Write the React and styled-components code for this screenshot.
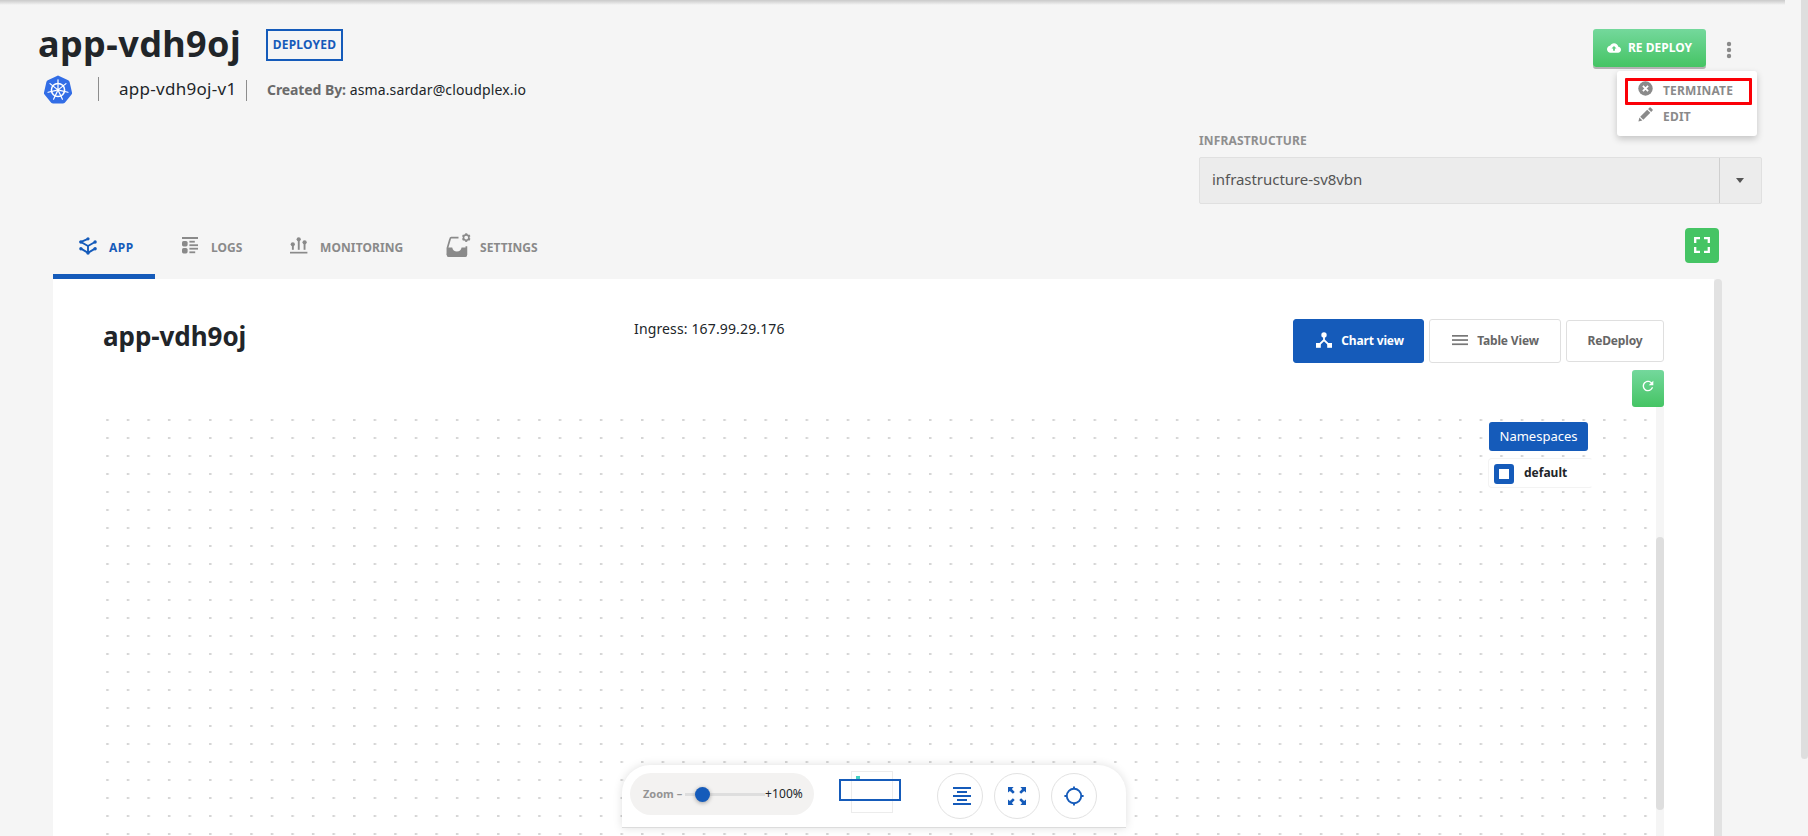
import React from 'react';
import styled, { createGlobalStyle } from 'styled-components';

const BLUE = '#155bba';
const GREEN = '#45c464';
const GREY = '#8a8a8a';

const GlobalStyle = createGlobalStyle`
  * { box-sizing: border-box; }
  body {
    margin: 0;
    overflow: hidden;
    background: #f5f5f5;
    color: #212529;
    font-family: "Noto Sans", "Open Sans", sans-serif;
  }
  button { font-family: inherit; margin: 0; padding: 0; border: 0; }
  svg { display: block; flex: none; }
`;

const Page = styled.div`
  display: flex;
  width: 1808px;
  height: 836px;
  overflow: hidden;
`;

const Main = styled.main`
  display: flex;
  flex-direction: column;
  width: 1801px;
`;

const ScrollTrack = styled.div`
  flex: none;
  width: ${(p) => p.$width}px;
  background: ${(p) => p.$bg || 'transparent'};
  padding-top: ${(p) => p.$offset || 0}px;
`;

const ScrollThumb = styled.div`
  height: ${(p) => p.$height};
  border-radius: ${(p) => p.$radius || '4px'};
  background: ${(p) => p.$color || '#dedede'};
`;

const TopShadow = styled.div`
  flex: none;
  width: 1785px;
  height: 5px;
  background: linear-gradient(#cacaca, #dcdcdc 45%, #f5f5f5);
`;

const Header = styled.header`
  display: flex;
  justify-content: space-between;
  flex: none;
  height: 203px;
  padding: 24px 39px 0 38px;
`;

const HeaderLeft = styled.div`
  display: flex;
  flex-direction: column;
`;

const TitleRow = styled.div`
  display: flex;
  height: 42px;
`;

const Title = styled.h1`
  margin: -9px 26px 0 0;
  width: 202px;
  font-size: 36px;
  font-weight: 700;
  line-height: 48px;
  letter-spacing: 0.4px;
  white-space: nowrap;
`;

const Badge = styled.span`
  width: 77px;
  height: 32px;
  border: 2px solid ${BLUE};
  color: ${BLUE};
  font-size: 12px;
  font-weight: 700;
  letter-spacing: 0.2px;
  line-height: 27px;
  text-align: center;
`;

const MetaRow = styled.div`
  display: flex;
  height: 32px;
  padding: 4px 0 0 5px;
  white-space: nowrap;
`;

const MetaDivider = styled.span`
  width: 1px;
  height: ${(p) => p.$height}px;
  margin: ${(p) => p.$margin};
  background: #8d8d8d;
`;

const Version = styled.span`
  width: 127px;
  font-size: 17px;
  line-height: 28px;
  letter-spacing: 0.28px;
`;

const Creator = styled.span`
  font-size: 14px;
  line-height: 30px;
  letter-spacing: 0.13px;
  b { color: #6a6a6a; letter-spacing: -0.09px; font-weight: 700; }
`;

const HeaderRight = styled.div`
  display: flex;
  flex-direction: column;
  align-items: flex-end;
  width: 563px;
`;

const Actions = styled.div`
  position: relative;
  display: flex;
  align-items: flex-start;
  width: 169px;
  height: 104px;
`;

const RedeployButton = styled.button`
  display: flex;
  align-items: center;
  width: 113px;
  height: 38px;
  padding: 0 0 1px 14px;
  gap: 7px;
  border-radius: 3px;
  background: linear-gradient(#74d89c, ${GREEN});
  box-shadow: 0 2px 0 #b3b3b3;
  color: #fff;
  font-size: 12px;
  font-weight: 700;
  white-space: nowrap;
`;

const MoreButton = styled.button`
  margin: 12px 0 0 20px;
  background: none;
`;

const Menu = styled.div`
  position: absolute;
  top: 42px;
  left: 24px;
  display: flex;
  flex-direction: column;
  width: 140px;
  height: 65px;
  padding: 7px 5px 0 8px;
  border-radius: 3px;
  background: #fff;
  box-shadow: 0 3px 7px rgba(0, 0, 0, 0.2);
`;

const MenuItem = styled.div`
  display: flex;
  align-items: center;
  height: 27px;
  gap: 10px;
  margin-top: ${(p) => (p.$marked ? 0 : -1)}px;
  padding-left: ${(p) => (p.$marked ? 10 : 13)}px;
  border: ${(p) => (p.$marked ? '3px solid #fb0007' : '0')};
  border-radius: 1px;
  color: ${GREY};
  font-size: 12px;
  font-weight: 700;
  letter-spacing: 0.2px;
  span { line-height: 16px; margin-top: -2px; }
  svg { margin-top: -7px; }
`;

const Field = styled.label`
  display: flex;
  flex-direction: column;
  width: 563px;
  gap: 8px;
`;

const FieldLabel = styled.span`
  height: 16px;
  color: #8f8f8f;
  font-size: 12px;
  font-weight: 700;
  letter-spacing: 0.14px;
  line-height: 16px;
`;

const Select = styled.div`
  display: flex;
  height: 47px;
  border: 1px solid #e0e0e0;
  border-radius: 2px;
  background: #ececec;
  color: #555;
  font-size: 15px;
  line-height: 43px;
  letter-spacing: -0.05px;
`;

const SelectValue = styled.span`
  flex: 1;
  padding-left: 12px;
`;

const SelectArrow = styled.span`
  display: flex;
  align-items: center;
  justify-content: center;
  width: 42px;
  padding-right: 1px;
  border-left: 1px solid #cfcfcf;
`;

const TabBar = styled.nav`
  display: flex;
  flex: none;
  height: 71px;
  padding: 0 0 0 53px;
`;

const Tab = styled.div`
  display: flex;
  flex: none;
  width: ${(p) => p.$width}px;
  height: 71px;
  padding: 20px 0 0 ${(p) => p.$pad}px;
  border-bottom: 5px solid ${(p) => (p.$active ? BLUE : 'transparent')};
  color: ${(p) => (p.$active ? BLUE : GREY)};
  font-size: 12px;
  font-weight: 700;
  letter-spacing: ${(p) => p.$spacing}px;
  white-space: nowrap;
`;

const TabIcon = styled.span`
  flex: none;
  width: ${(p) => p.$width}px;
  height: 30px;
  padding-top: ${(p) => p.$top}px;
`;

const TabText = styled.span`
  line-height: 16px;
  margin-top: 12px;
`;

const FullscreenButton = styled.button`
  display: flex;
  align-items: center;
  justify-content: center;
  width: 34px;
  height: 35px;
  margin: 20px 82px 0 auto;
  padding-bottom: 1px;
  border-radius: 4px;
  background: ${GREEN};
`;

const Body = styled.div`
  display: flex;
  flex: 1;
  min-height: 0;
  padding-left: 53px;
`;

const Panel = styled.section`
  display: flex;
  flex-direction: column;
  width: 1661px;
  padding: 40px 50px 0 50px;
  background: #fff;
`;

const PanelHeader = styled.div`
  display: flex;
  flex: none;
  height: 51px;
`;

const PanelTitle = styled.h2`
  width: 531px;
  margin: 0;
  font-size: 26px;
  font-weight: 700;
  line-height: 34px;
  letter-spacing: -0.05px;
`;

const Ingress = styled.p`
  flex: 1;
  margin: -1px 0 0;
  font-size: 14px;
  line-height: 22px;
  letter-spacing: 0.14px;
`;

const ViewButtons = styled.div`
  display: flex;
  align-items: flex-start;
  gap: 5px;
`;

const ViewButton = styled.button`
  display: flex;
  align-items: center;
  justify-content: center;
  gap: 9px;
  width: ${(p) => p.$width}px;
  height: ${(p) => p.$height || 44}px;
  margin-top: ${(p) => (p.$height ? 1 : 0)}px;
  padding: 0 0 2px ${(p) => p.$pad || 0}px;
  border: 1px solid ${(p) => (p.$primary ? BLUE : '#dfdfdf')};
  border-radius: 3px;
  background: ${(p) => (p.$primary ? BLUE : '#fff')};
  color: ${(p) => (p.$primary ? '#fff' : '#666')};
  font-size: 12px;
  font-weight: 700;
  letter-spacing: -0.15px;
  white-space: nowrap;
`;

const RefreshButton = styled.button`
  display: flex;
  flex: none;
  align-items: center;
  justify-content: center;
  align-self: flex-end;
  width: 32px;
  height: 37px;
  padding-bottom: 6px;
  border-radius: 3px;
  background: linear-gradient(#74d89c, ${GREEN});
`;

const CanvasRow = styled.div`
  display: flex;
  flex: 1;
  min-height: 0;
`;

const Canvas = styled.div`
  position: relative;
  width: 1553px;
  height: 429px;
  overflow: hidden;
`;

const Namespaces = styled.div`
  position: absolute;
  top: 15px;
  right: 63px;
  display: flex;
  flex-direction: column;
  gap: 7px;
  width: 105px;
`;

const NamespacesTitle = styled.div`
  width: 99px;
  height: 29px;
  margin-left: 1px;
  border-radius: 3px;
  background: ${BLUE};
  color: #fff;
  font-size: 13px;
  line-height: 28px;
  text-align: center;
`;

const NamespaceItem = styled.div`
  display: flex;
  align-items: center;
  gap: 10px;
  height: 30px;
  padding: 0 0 0 5px;
  border: 1px solid #f3f3f3;
  border-right-color: #fff;
  border-radius: 4px;
  background: #fff;
  font-size: 12px;
  font-weight: 700;
  span { margin-top: -1px; }
`;

const Checkbox = styled.i`
  width: 20px;
  height: 20px;
  margin-top: 1px;
  border: 5px solid ${BLUE};
  border-radius: 3px;
  background: #fff;
`;

const Toolbar = styled.div`
  position: absolute;
  left: 519px;
  top: 358px;
  display: flex;
  align-items: flex-start;
  width: 504px;
  height: 63px;
  padding: 8px 0 0 8px;
  border-bottom: 1px solid #dcdcdc;
  border-radius: 28px 28px 0 0;
  background: #fff;
  box-shadow: 0 0 10px rgba(0, 0, 0, 0.13);
`;

const ZoomPill = styled.div`
  display: flex;
  align-items: center;
  width: 184px;
  height: 42px;
  padding: 0 0 1px 13px;
  border-radius: 21px;
  background: #f3f2f1;
  font-size: 12px;
  letter-spacing: 0.1px;
`;

const ZoomLabel = styled.span`
  width: 42px;
  color: #949494;
  font-size: 11px;
  font-weight: 700;
  letter-spacing: 0;
  white-space: pre;
`;

const Slider = styled.div`
  display: flex;
  align-items: center;
  width: 80px;
  height: 3px;
  margin-top: 1px;
  padding-left: 10px;
  background: #dedede;
`;

const Knob = styled.i`
  width: 15px;
  height: 15px;
  border-radius: 50%;
  background: ${BLUE};
  box-shadow: 0 1px 4px rgba(0, 0, 0, 0.35);
`;

const MiniMap = styled.svg`
  margin: -3px 0 0 24px;
`;

const ToolButtons = styled.div`
  display: flex;
  gap: 11px;
  margin-left: 35px;
`;

const ToolButton = styled.button`
  display: flex;
  align-items: center;
  justify-content: center;
  width: 46px;
  height: 46px;
  padding: 0 0 1px ${(p) => p.$pad || 0}px;
  border: 1px solid #e2e2e2;
  border-radius: 50%;
  background: #fff;
`;

const spokes = [0, 51.43, 102.86, 154.29, 205.71, 257.14, 308.57];

function KubernetesLogo() {
  return (
    <svg width="30" height="29" viewBox="0 0 30 29">
      <path
        d="M15 .5 L25.2 5.3 Q26.3 5.9 26.6 7 L29 17.4 Q29.3 18.6 28.5 19.5 L21.8 27.8 Q21 28.6 19.9 28.6 H10.1 Q9 28.6 8.2 27.8 L1.5 19.5 Q.7 18.6 1 17.4 L3.4 7 Q3.7 5.9 4.8 5.3 Z"
        fill="#326de6"
      />
      <g stroke="#fff" fill="none" strokeLinecap="round">
        <circle cx="15" cy="15" r="6.6" strokeWidth="1.5" />
        {spokes.map((a) => (
          <path key={a} d="M15 13.2 V4.8" strokeWidth="1.2" transform={`rotate(${a} 15 15)`} />
        ))}
      </g>
      <circle cx="15" cy="15" r="1.7" fill="#fff" />
    </svg>
  );
}

function DotGrid() {
  return (
    <svg width="1553" height="429">
      <defs>
        <pattern id="dots" x="3.2" y="12" width="20.57" height="18" patternUnits="userSpaceOnUse">
          <rect x="0" y="0" width="2.5" height="2" fill="#d5d5d5" />
        </pattern>
        <pattern id="dots-next" x="1253.2" y="12" width="20.57" height="18" patternUnits="userSpaceOnUse">
          <rect x="0" y="0" width="2.5" height="2" fill="#d5d5d5" />
        </pattern>
      </defs>
      <rect x="0" y="10" width="1250" height="419" fill="url(#dots)" />
      <rect x="1253" y="10" width="296" height="419" fill="url(#dots-next)" />
    </svg>
  );
}

const AppIcon = () => (
  <svg width="18" height="18" viewBox="0 0 18 18" stroke={BLUE} strokeWidth="1.9" fill="none">
    <path d="M9 1.8 L2 5 L9 9 L16 5 M9 9 V16.2 M2 11.6 L9 15.8 L16 11.6" />
    <g fill={BLUE} stroke="none">
      <circle cx="9" cy="1.8" r="1.6" /><circle cx="1.9" cy="5" r="1.7" /><circle cx="16.1" cy="5" r="1.7" />
      <circle cx="1.9" cy="11.8" r="1.7" /><circle cx="16.1" cy="11.8" r="1.7" /><circle cx="9" cy="16.1" r="1.7" />
    </g>
  </svg>
);

const LogsIcon = () => (
  <svg width="16" height="17" viewBox="0 0 16 17" fill={GREY}>
    <rect width="16" height="2" />
    <rect y="4" width="5.6" height="5.4" rx="1.6" /><rect y="11" width="5.6" height="5.4" rx="1.6" />
    <rect x="7.4" y="3.8" width="5.4" height="1.8" /><rect x="7.4" y="7.3" width="8.6" height="1.8" />
    <rect x="7.4" y="10.8" width="8.6" height="1.8" /><rect x="7.4" y="14.4" width="5.8" height="1.8" />
  </svg>
);

const MonitoringIcon = () => (
  <svg width="18" height="17" viewBox="0 0 18 17" fill={GREY}>
    <rect y="14.8" width="17.4" height="1.7" />
    <rect x="1.9" y="6" width="1.9" height="6.8" /><rect x="7.8" y="2" width="1.9" height="10.8" /><rect x="13.6" y="4" width="1.9" height="8.8" />
    <circle cx="2.8" cy="7.3" r="2.1" /><circle cx="8.7" cy="2.3" r="2.1" /><circle cx="14.6" cy="5.3" r="2.1" />
  </svg>
);

const SettingsIcon = () => (
  <svg width="25" height="25" viewBox="0 0 25 25">
    <path
      d="M12.5 4.6 H5.3 Q4.4 4.6 4.2 5.5 L1.4 15 V21.6 Q1.4 23.2 3 23.2 H18.8 Q20.4 23.2 20.4 21.6 V13.2"
      fill="none" stroke={GREY} strokeWidth="1.7"
    />
    <path d="M1.4 14.5 H6.2 Q7 18.6 10.9 18.6 Q14.8 18.6 15.6 14.5 H21 V22 Q21 24 19 24 H3 Q.8 24 .8 22 Z" fill={GREY} />
    <g fill="none" stroke={GREY}>
      <circle cx="20.2" cy="4.6" r="2.7" strokeWidth="1.6" />
      {[0, 60, 120, 180, 240, 300].map((a) => (
        <path key={a} d="M20.2 1.8 V.3" strokeWidth="2.1" transform={`rotate(${a} 20.2 4.6)`} />
      ))}
    </g>
  </svg>
);

const CloudIcon = () => (
  <svg width="14" height="14" viewBox="0 0 24 24" fill="#fff">
    <path d="M19.35 10.04C18.67 6.59 15.64 4 12 4 9.11 4 6.6 5.64 5.35 8.04 2.34 8.36 0 10.91 0 14c0 3.31 2.69 6 6 6h13c2.76 0 5-2.24 5-5 0-2.64-2.05-4.78-4.65-4.96zM13.5 13v3.5h-3V13H7.7l4.3-4.3 4.3 4.3h-2.8z" />
  </svg>
);

const CancelIcon = () => (
  <svg width="15" height="15" viewBox="0 0 15 15">
    <circle cx="7.5" cy="7.5" r="7.2" fill={GREY} />
    <path d="M4.9 4.9 L10.1 10.1 M10.1 4.9 L4.9 10.1" stroke="#fff" strokeWidth="1.8" />
  </svg>
);

const PencilIcon = () => (
  <svg width="15" height="15" viewBox="0 0 15 15" fill={GREY}>
    <path d="M.4 14.6 L1.4 10.6 L4.4 13.6 Z M2.2 9.7 L9.2 2.7 L12.3 5.8 L5.3 12.8 Z M10.1 1.9 L11.6 .4 Q12.1 0 12.6 .4 L14.6 2.4 Q15 2.9 14.6 3.4 L13.1 4.9 Z" />
  </svg>
);

const MoreIcon = () => (
  <svg width="6" height="18" fill={GREY}>
    <circle cx="3" cy="3" r="2.2" /><circle cx="3" cy="9" r="2.2" /><circle cx="3" cy="15" r="2.2" />
  </svg>
);

const FullscreenIcon = () => (
  <svg width="16" height="16" viewBox="0 0 16 16" fill="none" stroke="#fff" strokeWidth="2.3">
    <path d="M1.2 6 V1.2 H6 M10 1.2 H14.8 V6 M14.8 10 V14.8 H10 M6 14.8 H1.2 V10" />
  </svg>
);

const ChartIcon = () => (
  <svg width="16" height="16" viewBox="0 0 16 16" fill="#fff">
    <circle cx="8" cy="2.9" r="2.7" /><rect y="11" width="4.8" height="4.8" /><rect x="11.2" y="11" width="4.8" height="4.8" />
    <path d="M8 4 V8.2 M2.4 13.4 L8 8 L13.6 13.4" fill="none" stroke="#fff" strokeWidth="1.8" />
  </svg>
);

const LinesIcon = () => (
  <svg width="16" height="12" fill="#777">
    <rect y="1" width="16" height="1.7" /><rect y="5.2" width="16" height="1.7" /><rect y="9.4" width="16" height="1.7" />
  </svg>
);

const RefreshIcon = () => (
  <svg width="16" height="16" viewBox="0 0 24 24" fill="#fff">
    <path d="M17.65 6.35C16.2 4.9 14.21 4 12 4c-4.42 0-7.99 3.58-7.99 8s3.57 8 7.99 8c3.73 0 6.84-2.55 7.73-6h-2.08c-.82 2.33-3.04 4-5.65 4-3.31 0-6-2.69-6-6s2.69-6 6-6c1.66 0 3.14.69 4.22 1.78L13 11h7V4l-2.35 2.35z" />
  </svg>
);

const AlignIcon = () => (
  <svg width="18" height="18" fill={BLUE}>
    <rect y="0" width="18" height="2" /><rect x="4" y="4" width="10" height="2" /><rect y="8" width="18" height="2" />
    <rect x="4" y="12" width="10" height="2" /><rect y="16" width="18" height="2" />
  </svg>
);

const ExpandIcon = () => (
  <svg width="18" height="18" viewBox="0 0 18 18" fill={BLUE}>
    {[0, 90, 180, 270].map((a) => (
      <path key={a} d="M0 0 H5.6 L3.9 1.9 L6.7 4.9 L4.9 6.7 L1.9 3.9 L0 5.6 Z" transform={`rotate(${a} 9 9)`} />
    ))}
  </svg>
);

const TargetIcon = () => (
  <svg width="20" height="20" viewBox="0 0 20 20" fill="none" stroke={BLUE} strokeWidth="1.9">
    <circle cx="10" cy="10" r="7.2" />
    <path d="M10 .4 V3 M10 17 V19.6 M.4 10 H3 M17 10 H19.6" />
  </svg>
);

const tabs = [
  { label: 'APP', Icon: AppIcon, width: 102, pad: 26, iconWidth: 30, top: 9, active: true, spacing: 0.5 },
  { label: 'LOGS', Icon: LogsIcon, width: 108, pad: 27, iconWidth: 29, top: 9, spacing: 0 },
  { label: 'MONITORING', Icon: MonitoringIcon, width: 156, pad: 27, iconWidth: 30, top: 9, spacing: 0.1 },
  { label: 'SETTINGS', Icon: SettingsIcon, width: 150, pad: 27, iconWidth: 34, top: 5, spacing: 0.07 },
];

export default function App() {
  return (
    <Page>
      <GlobalStyle />
      <Main>
        <TopShadow />
        <Header>
          <HeaderLeft>
            <TitleRow>
              <Title>app-vdh9oj</Title>
              <Badge>DEPLOYED</Badge>
            </TitleRow>
            <MetaRow>
              <KubernetesLogo />
              <MetaDivider $height={24} $margin="2px 20px 0 25px" />
              <Version>app-vdh9oj-v1</Version>
              <MetaDivider $height={21} $margin="5px 20px 0 0" />
              <Creator><b>Created By:</b> asma.sardar@cloudplex.io</Creator>
            </MetaRow>
          </HeaderLeft>
          <HeaderRight>
            <Actions>
              <RedeployButton><CloudIcon />RE DEPLOY</RedeployButton>
              <MoreButton><MoreIcon /></MoreButton>
              <Menu>
                <MenuItem $marked><CancelIcon /><span>TERMINATE</span></MenuItem>
                <MenuItem><PencilIcon /><span>EDIT</span></MenuItem>
              </Menu>
            </Actions>
            <Field>
              <FieldLabel>INFRASTRUCTURE</FieldLabel>
              <Select>
                <SelectValue>infrastructure-sv8vbn</SelectValue>
                <SelectArrow>
                  <svg width="8" height="5" fill="#555"><path d="M0 0 H8 L4 5 Z" /></svg>
                </SelectArrow>
              </Select>
            </Field>
          </HeaderRight>
        </Header>
        <TabBar>
          {tabs.map(({ label, Icon, width, pad, iconWidth, top, active, spacing }) => (
            <Tab key={label} $width={width} $pad={pad} $active={active} $spacing={spacing}>
              <TabIcon $width={iconWidth} $top={top}><Icon /></TabIcon>
              <TabText>{label}</TabText>
            </Tab>
          ))}
          <FullscreenButton><FullscreenIcon /></FullscreenButton>
        </TabBar>
        <Body>
          <Panel>
            <PanelHeader>
              <PanelTitle>app-vdh9oj</PanelTitle>
              <Ingress>Ingress: 167.99.29.176</Ingress>
              <ViewButtons>
                <ViewButton $primary $width={131} $pad={3}><ChartIcon />Chart view</ViewButton>
                <ViewButton $width={132} $pad={1}><LinesIcon />Table View</ViewButton>
                <ViewButton $width={98} $height={42}>ReDeploy</ViewButton>
              </ViewButtons>
            </PanelHeader>
            <RefreshButton><RefreshIcon /></RefreshButton>
            <CanvasRow>
              <Canvas>
                <DotGrid />
                <Namespaces>
                  <NamespacesTitle>Namespaces</NamespacesTitle>
                  <NamespaceItem><Checkbox /><span>default</span></NamespaceItem>
                </Namespaces>
                <Toolbar>
                  <ZoomPill>
                    <ZoomLabel>Zoom –</ZoomLabel>
                    <Slider><Knob /></Slider>
                    <span>+100%</span>
                  </ZoomPill>
                  <MiniMap width="64" height="44">
                    <rect x="13.5" y="1.5" width="41" height="41" fill="#fff" stroke="#ececec" />
                    <rect x="18" y="6" width="4" height="4" fill="#45d0c4" />
                    <rect x="2" y="10" width="60" height="20" fill="none" stroke={BLUE} strokeWidth="2" />
                  </MiniMap>
                  <ToolButtons>
                    <ToolButton $pad={4}><AlignIcon /></ToolButton>
                    <ToolButton><ExpandIcon /></ToolButton>
                    <ToolButton><TargetIcon /></ToolButton>
                  </ToolButtons>
                </Toolbar>
              </Canvas>
              <ScrollTrack $width={8} $bg="#f5f5f5" $offset={130}>
                <ScrollThumb $height="273px" />
              </ScrollTrack>
            </CanvasRow>
          </Panel>
          <ScrollTrack $width={8}>
            <ScrollThumb $height="100%" $color="#e2e2e2" $radius="4px 4px 0 0" />
          </ScrollTrack>
        </Body>
      </Main>
      <ScrollTrack $width={7}>
        <ScrollThumb $height="759px" $radius="0 0 4px 4px" />
      </ScrollTrack>
    </Page>
  );
}
